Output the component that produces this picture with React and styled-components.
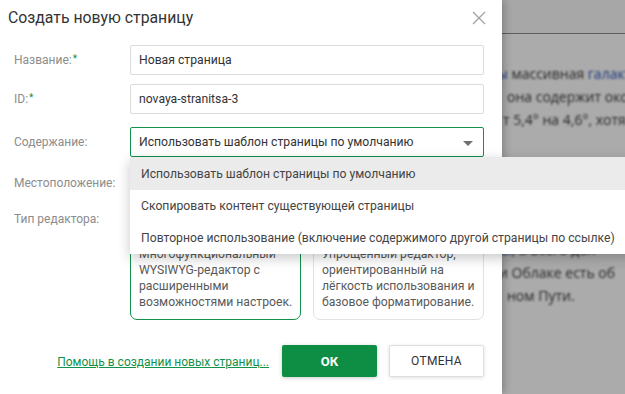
import React from 'react';
import styled, { createGlobalStyle } from 'styled-components';

const GlobalStyle = createGlobalStyle`
  html, body {
    margin: 0;
    padding: 0;
  }
  body {
    width: 625px;
    height: 394px;
    overflow: hidden;
    font-family: Roboto, "Noto Sans", sans-serif;
  }
`;

const green = '#12914a';
const uiFont = 'Roboto, "Noto Sans", sans-serif';

const backLines = [
	{ shift: -8, parts: [['link', 'ы'], ['text', ' массивная '], ['link', 'галактика']] },
	{ shift: 2, parts: [['text', 'она содержит около']] },
	{ shift: -2, parts: [['text', 'т 5,4° на 4,6°, хотя']] },
];

const backLinesBottom = [
	{ shift: -4, parts: [['link', 'ы'], ['text', ', а всего дол']] },
	{ shift: -6, parts: [['text', 'и Облаке есть об']] },
	{ shift: 2, parts: [['text', 'ном Пути.']] },
];

const menuItems = [
	'Использовать шаблон страницы по умолчанию',
	'Скопировать контент существующей страницы',
	'Повторное использование (включение содержимого другой страницы по ссылке)',
];

function CloseIcon() {
	return (
		<svg width="14" height="14" viewBox="0 0 14 14">
			<path d="M1 1 L13 13 M13 1 L1 13" stroke="#a3a3a3" strokeWidth="1.3" fill="none" />
		</svg>
	);
}

function BackLine({ line }) {
	return (
		<PageLine $shift={line.shift}>
			{line.parts.map(([kind, txt], i) =>
				kind === 'link' ? <PageLink key={i}>{txt}</PageLink> : <span key={i}>{txt}</span>
			)}
		</PageLine>
	);
}

function App() {
	return (
		<Screen>
			<GlobalStyle />
			<Backdrop>
				<PageHeader />
				<PageText>
					{backLines.map((l, i) => (
						<BackLine key={i} line={l} />
					))}
					<PageGap />
					{backLinesBottom.map((l, i) => (
						<BackLine key={i} line={l} />
					))}
				</PageText>
				<Shade />
			</Backdrop>

			<Dialog>
				<Header>
					<Title>Создать новую страницу</Title>
					<CloseButton>
						<CloseIcon />
					</CloseButton>
				</Header>

				<Form>
					<Row $gap={0}>
						<Label>
							Название:<Star>*</Star>
						</Label>
						<Input>Новая страница</Input>
					</Row>
					<Row $gap={9}>
						<Label>
							ID:<Star>*</Star>
						</Label>
						<Input>novaya-stranitsa-3</Input>
					</Row>
					<Row $gap={13}>
						<Label>Содержание:</Label>
						<SelectWrap>
							<Input $focused>
								Использовать шаблон страницы по умолчанию
								<Arrow />
							</Input>
							<Menu>
								{menuItems.map((item, i) => (
									<MenuItem key={i} $active={i === 0}>
										{item}
									</MenuItem>
								))}
							</Menu>
						</SelectWrap>
					</Row>
					<Row $gap={11}>
						<Label>Местоположение:</Label>
						<Input>Главная страница</Input>
					</Row>
					<Row $gap={10} $top>
						<Label $top>Тип редактора:</Label>
						<Cards>
							<Card $active>
								<CardHead>
									<Radio $active />
									Визуальный
								</CardHead>
								<CardText>
									Многофункциональный WYSIWYG-редактор с расширенными возможностями настроек.
								</CardText>
							</Card>
							<Card>
								<CardHead>
									<Radio />
									Простой
								</CardHead>
								<CardText>
									Упрощенный редактор, ориентированный на лёгкость использования и базовое форматирование.
								</CardText>
							</Card>
						</Cards>
					</Row>
				</Form>

				<Footer>
					<HelpLink>Помощь в создании новых страниц...</HelpLink>
					<OkButton>ОК</OkButton>
					<CancelButton>ОТМЕНА</CancelButton>
				</Footer>
			</Dialog>
		</Screen>
	);
}

export default App;

const Screen = styled.div`
	position: relative;
	width: 625px;
	height: 394px;
	overflow: hidden;
	background: #fff;
`;

const Backdrop = styled.div`
	position: absolute;
	inset: 0;
	background: #fff;
`;

const PageHeader = styled.div`
	height: 33px;
	border-bottom: 1px solid #8a8a8a;
	background: #fafafa;
`;

const PageText = styled.div`
	padding: 28px 0 0 505px;
	font-family: "Open Sans", sans-serif;
	font-size: 14px;
	line-height: 23px;
	color: #3a3a3a;
	filter: blur(1px);
`;

const PageLine = styled.div`
	white-space: nowrap;
	margin-left: ${(p) => p.$shift}px;
`;

const PageLink = styled.span`
	color: #2a55b8;
`;

const PageGap = styled.div`
	height: 107px;
`;

const Shade = styled.div`
	position: absolute;
	inset: 0;
	background: rgba(0, 0, 0, 0.33);
`;

const Dialog = styled.div`
	position: absolute;
	left: 0;
	top: 0;
	width: 502px;
	height: 394px;
	background: #fff;
	box-shadow: 2px 0 8px rgba(0, 0, 0, 0.25);
	display: flex;
	flex-direction: column;
`;

const Header = styled.div`
	height: 36px;
	display: flex;
	align-items: center;
	justify-content: space-between;
	padding: 0 16px 0 8px;
	box-sizing: border-box;
`;

const Title = styled.div`
	font-size: 15.8px;
	color: #333;
	margin-top: -2px;
`;

const CloseButton = styled.div`
	width: 14px;
	height: 14px;
	display: flex;
	margin-top: -1px;
`;

const Form = styled.div`
	padding: 9px 18px 0 14px;
	display: flex;
	flex-direction: column;
`;

const Row = styled.div`
	display: grid;
	grid-template-columns: 116px 354px;
	align-items: ${(p) => (p.$top ? 'start' : 'center')};
	margin-top: ${(p) => p.$gap}px;
`;

const Label = styled.div`
	font-size: 12px;
	color: #8c8c8c;
	padding-top: ${(p) => (p.$top ? '4px' : '0')};
`;

const Star = styled.span`
	color: ${green};
	font-size: 10px;
	vertical-align: top;
	margin-left: 1px;
`;

const Input = styled.div`
	position: relative;
	height: 30px;
	box-sizing: border-box;
	border: 1px solid ${(p) => (p.$focused ? green : '#dcdcdc')};
	border-radius: 2px;
	padding: 0 8px;
	display: flex;
	align-items: center;
	font-size: 12.2px;
	color: #333;
`;

const Arrow = styled.span`
	position: absolute;
	right: 10px;
	top: 13px;
	width: 0;
	height: 0;
	border-left: 5px solid transparent;
	border-right: 5px solid transparent;
	border-top: 5px solid #707070;
`;

const SelectWrap = styled.div`
	position: relative;
`;

const Menu = styled.div`
	position: absolute;
	left: 0;
	top: 30px;
	z-index: 5;
	min-width: 100%;
	background: #fff;
	box-shadow: 0 4px 12px rgba(0, 0, 0, 0.22);
	padding-right: 14px;
	padding-top: 1px;
`;

const MenuItem = styled.div`
	height: 32px;
	display: flex;
	align-items: center;
	padding: 0 11px;
	white-space: nowrap;
	font-size: 12.2px;
	color: #444;
	background: ${(p) => (p.$active ? '#ebebeb' : '#fff')};
	margin-right: ${(p) => (p.$active ? '-14px' : '0')};
	margin-top: ${(p) => (p.$active ? '-1px' : '0')};
	padding-top: ${(p) => (p.$active ? '1px' : '0')};
`;

const Cards = styled.div`
	display: grid;
	grid-template-columns: 1fr 1fr;
	gap: 12px;
`;

const Card = styled.div`
	height: 112px;
	box-sizing: border-box;
	border: 1px solid ${(p) => (p.$active ? green : '#e2e2e2')};
	border-radius: 7px;
	padding: 9px 4px 9px 8px;
`;

const CardHead = styled.div`
	height: 20px;
	margin-bottom: 8px;
	display: flex;
	align-items: center;
	gap: 6px;
	font-size: 12px;
	font-weight: 600;
	color: #333;
`;

const Radio = styled.span`
	width: 12px;
	height: 12px;
	border-radius: 50%;
	border: ${(p) => (p.$active ? `4px solid ${green}` : '1px solid #bbb')};
	box-sizing: border-box;
`;

const CardText = styled.div`
	font-size: 12.2px;
	line-height: 16px;
	color: #5a5a5a;
`;

const Footer = styled.div`
	margin-top: 25px;
	padding-right: 18px;
	display: flex;
	align-items: center;
	justify-content: flex-end;
	gap: 12px;
`;

const HelpLink = styled.a`
	font-size: 12px;
	color: ${green};
	text-decoration: underline;
	margin-right: 1px;
	margin-top: 2px;
`;

const OkButton = styled.button`
	width: 95px;
	height: 32px;
	border: none;
	border-radius: 2px;
	background: #0e8e44;
	color: #fff;
	font-family: ${uiFont};
	font-weight: 700;
	font-size: 13px;
	box-shadow: 0 1px 4px rgba(0, 0, 0, 0.2);
`;

const CancelButton = styled.button`
	width: 95px;
	height: 32px;
	border: 1px solid #dedede;
	border-radius: 2px;
	background: #fff;
	color: #333;
	font-family: ${uiFont};
	font-size: 12px;
	letter-spacing: 0.3px;
	box-shadow: 0 1px 4px rgba(0, 0, 0, 0.12);
`;
